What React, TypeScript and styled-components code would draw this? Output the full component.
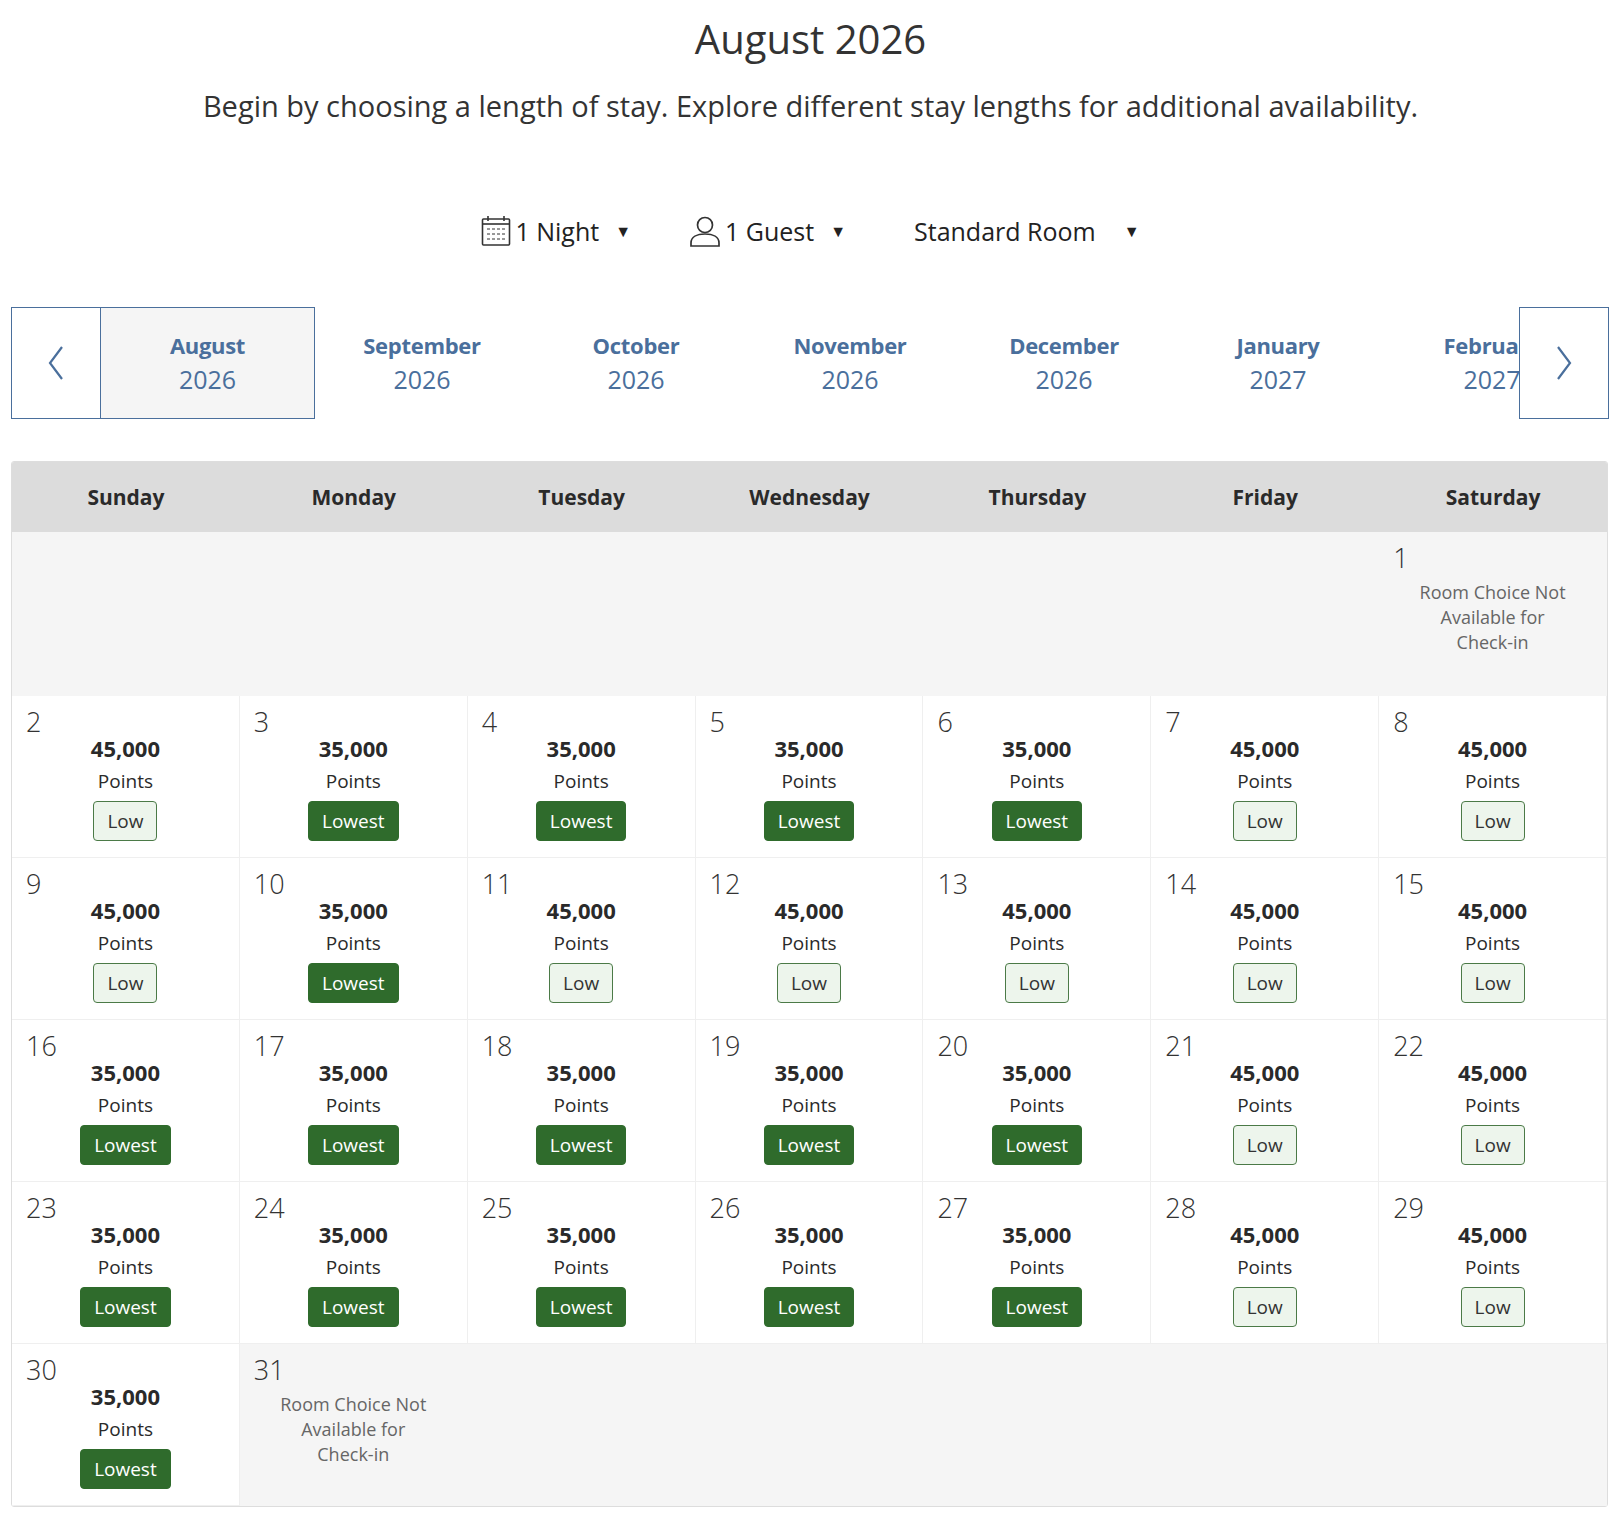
import React from "react";
import styled, { createGlobalStyle } from "styled-components";

const Global = createGlobalStyle`
  body { margin: 0; background: #fff; font-family: "Open Sans", "Noto Sans", sans-serif; color: #2a2a2a; }
`;
const Page = styled.div`padding: 12px 12px 0 11px;`;
const Title = styled.h1`margin: 0; text-align: center; font-weight: 400; font-size: 40px; line-height: 54px; color: #333;`;
const Sub = styled.p`margin: 20px 0 0; text-align: center; font-size: 29px; line-height: 40px; color: #333;`;
const Controls = styled.div`display: flex; justify-content: center; align-items: center; gap: 58px; margin-top: 88px; font-size: 25px; color: #222;`;
const Ctrl = styled.div`display: flex; align-items: center; gap: 4px;`;
const Caret = styled.span<{ gap?: number }>`font-size: 16px; margin-left: ${p => p.gap ?? 12}px;`;
const MonthNav = styled.div`display: flex; margin-top: 59px; height: 112px; width: 1598px;`;
const Arrow = styled.div`width: 88px; flex-shrink: 0; border: 1px solid #4a6f9c; display: flex; align-items: center; justify-content: center; background: #fff; z-index: 1;`;
const Month = styled.div<{ active?: boolean }>`width: 214px; flex-shrink: 0; box-sizing: border-box; display: flex; flex-direction: column; align-items: center; justify-content: center; color: #4a6f9c;
  ${p => p.active ? "border: 1px solid #4a6f9c; border-left: none; background: #f5f5f5;" : ""}
  b { font-size: 22px; line-height: 32px; font-weight: 700; letter-spacing: -0.3px; } span { font-size: 25px; line-height: 36px; }`;
const Months = styled.div`flex: 1; display: flex; overflow: hidden;`;
const Cal = styled.div`margin-top: 42px; border: 1px solid #ddd; border-radius: 3px; width: 1597px; box-sizing: border-box; overflow: hidden;`;
const Head = styled.div`display: grid; grid-template-columns: repeat(7, 1fr); background: #dcdcdc; height: 70px; align-items: center; text-align: center; font-weight: 700; font-size: 21px; color: #2a2a2a;`;
const Grid = styled.div`display: grid; grid-template-columns: repeat(7, 1fr);`;
const Cell = styled.div<{ empty?: boolean; tall?: boolean }>`height: ${p => p.tall ? 164 : 162}px; box-sizing: border-box; padding: 10px 14px; background: ${p => p.empty ? "#f5f5f5" : "#fff"};
  border-right: 1px solid ${p => p.empty ? "#f5f5f5" : "#efefef"}; border-bottom: 1px solid ${p => p.empty ? "#f5f5f5" : "#efefef"}; display: flex; flex-direction: column; align-items: center;`;
const Num = styled.div`align-self: flex-start; font-size: 27px; font-weight: 300; line-height: 32px; color: #333;`;
const Pts = styled.div`font-weight: 700; font-size: 22px; line-height: 26px; margin-top: -3px;`;
const PtsL = styled.div`font-size: 19px; line-height: 26px; margin-top: 7px;`;
const Badge = styled.div<{ lowest?: boolean }>`margin-top: 7px; height: 40px; box-sizing: border-box; padding: 0 13px; display: flex; align-items: center; border-radius: 4px; font-size: 19px;
  ${p => p.lowest ? "background: #2f6b2c; color: #fff; border: 1px solid #2f6b2c;" : "background: #edf5ec; color: #333; border: 1px solid #4b7a47;"}`;
const NA = styled.div`margin-top: 6px; text-align: center; font-size: 18px; line-height: 25px; color: #666; width: 160px;`;

const Chev = ({ d }: { d: string }) => (
  <svg width="24" height="40" viewBox="0 0 24 40"><path d={d} fill="none" stroke="#4a6f9c" strokeWidth="2.2" /></svg>
);

const data: [number, boolean][] = [];
const low45 = new Set([2, 7, 8, 9, 11, 12, 13, 14, 15, 21, 22, 28, 29]);
for (let d = 2; d <= 30; d++) data.push([d, low45.has(d)]);

export default function App() {
  const months = [["August", "2026"], ["September", "2026"], ["October", "2026"], ["November", "2026"], ["December", "2026"], ["January", "2027"], ["February", "2027"]];
  return (
    <Page>
      <Global />
      <Title>August 2026</Title>
      <Sub>Begin by choosing a length of stay. Explore different stay lengths for additional availability.</Sub>
      <Controls>
        <Ctrl>
          <svg width="30" height="32" viewBox="0 0 30 32" fill="none" stroke="#333" strokeWidth="1.6">
            <rect x="1.5" y="4" width="27" height="26" rx="1" />
            <line x1="1.5" y1="9" x2="28.5" y2="9" />
            <line x1="7" y1="1" x2="7" y2="6" /><line x1="23" y1="1" x2="23" y2="6" />
            {[14, 19, 24].map(y => <line key={y} x1="6" y1={y} x2="24" y2={y} strokeDasharray="3 2" strokeWidth="1" />)}
          </svg>
          <span>1 Night</span><Caret>▼</Caret>
        </Ctrl>
        <Ctrl>
          <svg width="32" height="32" viewBox="0 0 32 32" fill="none" stroke="#333" strokeWidth="1.7">
            <circle cx="16" cy="10" r="7.5" />
            <path d="M2 31 V28 C2 22 8 19 16 19 C24 19 30 22 30 28 V31 Z" />
          </svg>
          <span>1 Guest</span><Caret>▼</Caret>
        </Ctrl>
        <Ctrl style={{ marginLeft: 10 }}>
          <span>Standard Room</span><Caret gap={24}>▼</Caret>
        </Ctrl>
      </Controls>
      <MonthNav>
        <Arrow><Chev d="M18 4 L6 20 L18 36" /></Arrow>
        <Months>
          {months.map(([m, y], i) => <Month key={m} active={i === 0}><b>{m}</b><span>{y}</span></Month>)}
        </Months>
        <Arrow><Chev d="M6 4 L18 20 L6 36" /></Arrow>
      </MonthNav>
      <Cal>
        <Head>{["Sunday", "Monday", "Tuesday", "Wednesday", "Thursday", "Friday", "Saturday"].map(d => <div key={d}>{d}</div>)}</Head>
        <Grid>
          {[0, 1, 2, 3, 4, 5].map(i => <Cell key={"e" + i} empty tall />)}
          <Cell empty tall><Num>1</Num><NA>Room Choice Not Available for Check-in</NA></Cell>
          {data.map(([d, low]) => (
            <Cell key={d}>
              <Num>{d}</Num>
              <Pts>{low ? "45,000" : "35,000"}</Pts>
              <PtsL>Points</PtsL>
              <Badge lowest={!low}>{low ? "Low" : "Lowest"}</Badge>
            </Cell>
          ))}
          <Cell empty><Num>31</Num><NA>Room Choice Not Available for Check-in</NA></Cell>
          {[0, 1, 2, 3, 4].map(i => <Cell key={"f" + i} empty />)}
        </Grid>
      </Cal>
    </Page>
  );
}
